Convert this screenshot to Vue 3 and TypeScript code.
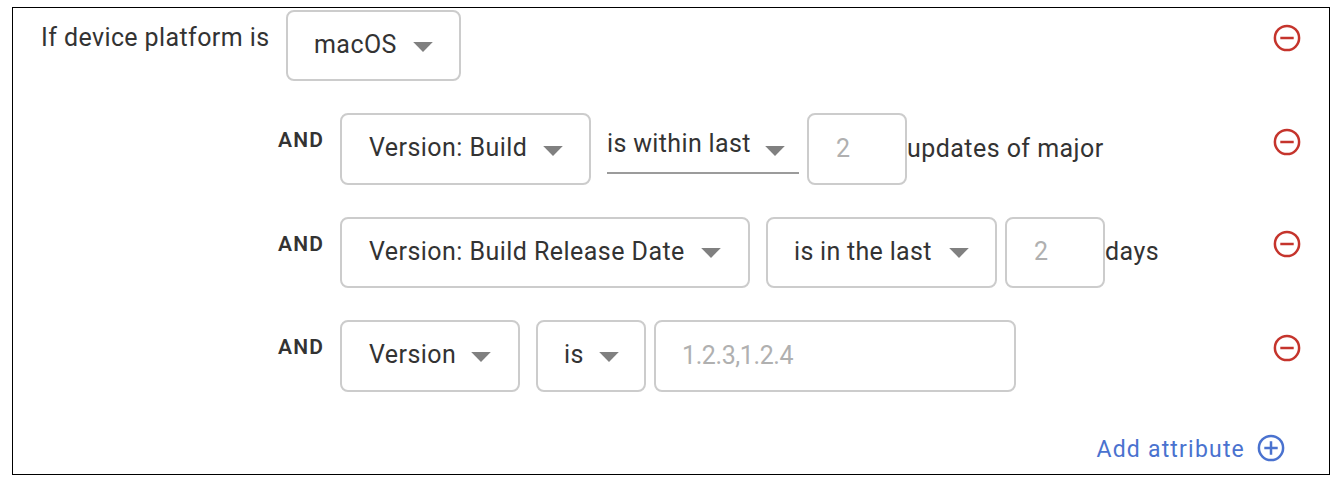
<script setup lang="ts">
interface Field {
  kind: 'select' | 'line' | 'input'
  name: string
  text: string
  suffix?: string
}
interface Rule {
  id: string
  label: string
  fields: Field[]
}

const rules: Rule[] = [
  {
    id: 'platform',
    label: 'If device platform is',
    fields: [{ kind: 'select', name: 'os', text: 'macOS' }],
  },
  {
    id: 'build',
    label: 'AND',
    fields: [
      { kind: 'select', name: 'attr-build', text: 'Version: Build' },
      { kind: 'line', name: 'within', text: 'is within last' },
      { kind: 'input', name: 'updates', text: '2', suffix: 'updates of major' },
    ],
  },
  {
    id: 'release',
    label: 'AND',
    fields: [
      { kind: 'select', name: 'attr-release', text: 'Version: Build Release Date' },
      { kind: 'select', name: 'in-last', text: 'is in the last' },
      { kind: 'input', name: 'days', text: '2', suffix: 'days' },
    ],
  },
  {
    id: 'version',
    label: 'AND',
    fields: [
      { kind: 'select', name: 'attr-version', text: 'Version' },
      { kind: 'select', name: 'is', text: 'is' },
      { kind: 'input', name: 'versions', text: '1.2.3,1.2.4' },
    ],
  },
]
</script>

<template>
  <main class="panel">
    <section v-for="rule in rules" :key="rule.id" class="rule" :class="rule.id">
      <span class="label">{{ rule.label }}</span>
      <template v-for="field in rule.fields" :key="field.name">
        <div class="field" :class="[field.kind, field.name]">
          <span class="value">{{ field.text }}</span>
          <svg v-if="field.kind !== 'input'" class="arrow" width="20" height="10" viewBox="0 0 20 10">
            <path d="M0.2 0H19.8L10 9.9Z" fill="#808080" />
          </svg>
        </div>
        <span v-if="field.suffix" class="suffix">{{ field.suffix }}</span>
      </template>
      <button class="remove" type="button" aria-label="Remove">
        <svg width="28" height="28" viewBox="0 0 28 28" fill="none" stroke="#c5342c" stroke-width="2.5">
          <circle cx="14" cy="14" r="12.1" />
          <path d="M7.3 14H20.7" />
        </svg>
      </button>
    </section>
    <button class="add" type="button">
      <span>Add attribute</span>
      <svg width="28" height="28" viewBox="0 0 28 28" fill="none" stroke="#4a72cf" stroke-width="2.5">
        <circle cx="14" cy="14" r="12.1" />
        <path d="M7.3 14H20.7M14 7.3V20.7" />
      </svg>
    </button>
  </main>
</template>

<style>
body {
  margin: 0;
  background: #fff;
}
</style>

<style scoped>
.panel {
  box-sizing: border-box;
  width: 1318px;
  height: 468px;
  margin: 7px 0 0 12px;
  padding-top: 2px;
  border: 1px solid #000;
  color: #333;
  font: 25px/32px Roboto, "Open Sans", sans-serif;
  letter-spacing: 0.45px;
  white-space: nowrap;
  display: flex;
  flex-direction: column;
}
.rule {
  display: flex;
  align-items: flex-start;
  flex: none;
  height: 103px;
  padding-right: 28px;
}
.rule.build {
  height: 104px;
}
.label {
  box-sizing: border-box;
  flex: none;
  width: 327px;
  padding-left: 265px;
  margin-top: 11px;
  font-size: 21px;
  font-weight: 600;
  letter-spacing: 1.2px;
}
.platform .label {
  width: 273px;
  padding-left: 28px;
  margin-top: 12px;
  font-size: 25px;
  font-weight: 400;
  letter-spacing: 0.4px;
}
.field {
  box-sizing: border-box;
  flex: none;
  display: flex;
  align-items: flex-start;
  justify-content: space-between;
  height: 71px;
  margin-right: 8px;
  padding: 17px 26px 0 26px;
  border: 2px solid #ccc;
  border-radius: 8px;
}
.build .field,
.version .field {
  height: 72px;
}
.arrow {
  flex: none;
  display: block;
  margin-top: 13px;
}
.build .arrow {
  margin-top: 14px;
}
.release .arrow {
  margin-top: 12px;
}
.os { width: 175px; }
.attr-build { width: 251px; margin-right: 16px; padding-left: 27px; }
.attr-release { width: 410px; margin-right: 16px; padding-left: 27px; padding-right: 27px; }
.attr-version { width: 180px; margin-right: 16px; padding-left: 27px; padding-right: 27px; }
.in-last { width: 231px; letter-spacing: 0.3px; }
.is { width: 110px; padding-right: 25px; }
.updates,
.days { width: 100px; margin-right: 0; padding-left: 27px; }
.versions { width: 362px; letter-spacing: -0.4px; }
.input {
  color: #b0b0b0;
}
.build .input,
.version .input {
  padding-top: 18px;
}
.build .field.line {
  width: 192px;
  height: 61px;
  padding: 15px 14px 0 0;
  border-width: 0 0 2px;
  border-color: #9b9b9b;
  border-radius: 0;
  letter-spacing: 0.35px;
}
.build .line .arrow {
  margin-top: 18px;
}
.suffix {
  margin-top: 19px;
}
.build .suffix {
  margin-top: 20px;
}
button {
  padding: 0;
  border: 0;
  background: none;
  font: inherit;
}
.remove {
  flex: none;
  width: 28px;
  height: 28px;
  margin: 14px 0 0 auto;
}
.build .remove {
  margin-top: 15px;
}
.release .remove {
  margin-top: 13px;
}
button svg {
  display: block;
}
.add {
  display: flex;
  align-self: flex-end;
  align-items: flex-start;
  gap: 12px;
  margin: 11px 44px 0 0;
  color: #4a72cf;
  font-size: 23px;
  letter-spacing: 1.2px;
}
</style>
